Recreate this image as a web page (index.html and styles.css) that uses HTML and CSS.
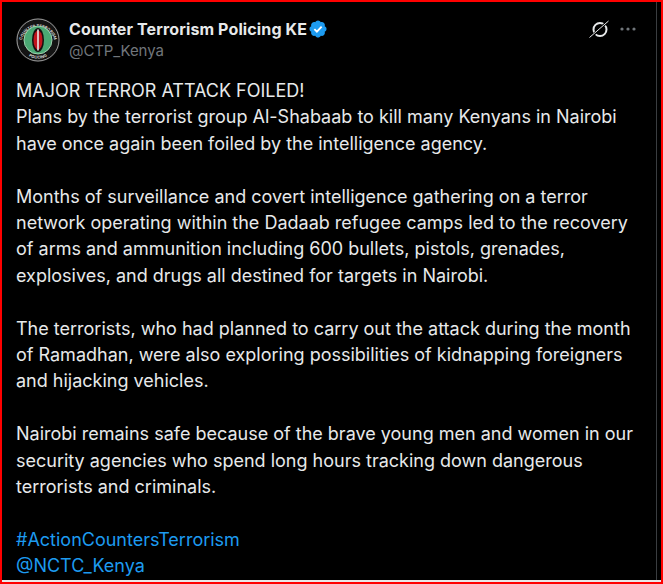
FILE: index.html
```html
<!DOCTYPE html>
<html lang="en">
<head>
  <meta charset="UTF-8">
  <title>Counter Terrorism Policing KE</title>
  <link rel="stylesheet" href="styles.css">
</head>
<body>
  <div class="frame">
    <article class="tweet">
      <header class="tweet-head">
        <svg class="avatar" width="44" height="44" viewBox="0 0 44 44">
          <defs>
            <path id="ring-top" d="M5.500 24A16.600 16.600 0 0 1 38.500 24"/>
            <path id="ring-bottom" d="M3.500 24A18.600 18.600 0 0 0 40.500 24"/>
          </defs>
          <circle cx="22" cy="22" r="22" fill="#141414"/>
          <circle cx="22" cy="22" r="21" fill="none" stroke="#9a9a9a" stroke-width="1"/>
          <text class="ring-text"><textPath href="#ring-top" startOffset="50%" text-anchor="middle">COUNTER TERRORISM</textPath></text>
          <text class="ring-text"><textPath href="#ring-bottom" startOffset="50%" text-anchor="middle">POLICING</textPath></text>
          <circle cx="22" cy="22" r="14" fill="#4aa873" stroke="#9fd0ae" stroke-width="1"/>
          <ellipse cx="22" cy="22" rx="6" ry="12" fill="#15100f"/>
          <ellipse cx="22" cy="22" rx="4.500" ry="9.500" fill="#c0141c"/>
          <rect x="21.200" y="11.500" width="1.600" height="21" fill="#e8e8e8"/>
        </svg>
        <div class="names">
          <div class="name-row">
            <span class="name">Counter Terrorism Policing KE</span>
            <svg class="badge" width="20" height="20" viewBox="0 0 22 22">
              <path fill="#1d9bf0" d="M20.400 11c0-1.300-.8-2.500-2-3 .4-1.300.1-2.700-.8-3.600-.9-.9-2.300-1.200-3.600-.8-.5-1.200-1.700-2-3-2s-2.500.8-3 2c-1.300-.4-2.700-.1-3.600.8-.9.9-1.200 2.300-.8 3.600-1.200.5-2 1.700-2 3s.8 2.500 2 3c-.4 1.300-.1 2.700.8 3.600.9.9 2.300 1.200 3.600.8.5 1.200 1.700 2 3 2s2.500-.8 3-2c1.300.4 2.700.1 3.600-.8.9-.9 1.200-2.300.8-3.600 1.200-.5 2-1.700 2-3z"/>
              <path fill="none" stroke="#fff" stroke-width="2" d="M7 11.200l2.800 2.800 5.200-5.600"/>
            </svg>
          </div>
          <div class="handle">@CTP_Kenya</div>
        </div>
        <div class="head-actions">
          <svg class="grok" width="22" height="22" viewBox="0 0 22 22">
            <circle cx="11" cy="11.500" r="6.500" fill="none" stroke="#e7e9ea" stroke-width="2"/>
            <path d="M3 18L17 5" stroke="#000" stroke-width="2.500"/>
            <path d="M0.500 19.500L19.500 3" stroke="#e7e9ea" stroke-width="1"/>
          </svg>
          <svg class="more" width="18" height="18" viewBox="0 0 18 18">
            <circle cx="3" cy="9" r="1.600" fill="#71767b"/>
            <circle cx="9" cy="9" r="1.600" fill="#71767b"/>
            <circle cx="15" cy="9" r="1.600" fill="#71767b"/>
          </svg>
        </div>
      </header>

      <div class="tweet-text">
        <p>MAJOR TERROR ATTACK FOILED!<br>
        Plans by the terrorist group Al-Shabaab to kill many Kenyans in Nairobi<br>
        have once again been foiled by the intelligence agency.</p>
        <p>Months of surveillance and covert intelligence gathering on a terror<br>
        network operating within the Dadaab refugee camps led to the recovery<br>
        of arms and ammunition including 600 bullets, pistols, grenades,<br>
        explosives, and drugs all destined for targets in Nairobi.</p>
        <p>The terrorists, who had planned to carry out the attack during the month<br>
        of Ramadhan, were also exploring possibilities of kidnapping foreigners<br>
        and hijacking vehicles.</p>
        <p>Nairobi remains safe because of the brave young men and women in our<br>
        security agencies who spend long hours tracking down dangerous<br>
        terrorists and criminals.</p>
        <p><a href="#">#ActionCountersTerrorism</a><br>
        <a href="#">@NCTC_Kenya</a></p>
      </div>
    </article>
  </div>
</body>
</html>
```
FILE: styles.css
```css
html, body {
  margin: 0;
  padding: 0;
}

body {
  width: 663px;
  height: 584px;
  overflow: hidden;
  background-color: #f00;
  font-family: Inter, "Liberation Sans", Arial, sans-serif;
}

.frame {
  box-sizing: border-box;
  width: 659px;
  height: 580px;
  margin: 2px;
  padding-right: 4px;
  background-color: #000;
  border-bottom: 2px solid #e7e7e7;
}

.tweet {
  box-sizing: border-box;
  height: 100%;
  padding: 16px 14px 0 14px;
  background-color: #000;
  border-right: 1px solid #3a3d40;
  overflow: hidden;
}

.tweet-head {
  display: flex;
  align-items: flex-start;
  gap: 9px;
}

.names {
  flex: 1;
}

.name-row {
  display: flex;
  align-items: center;
  gap: 1px;
}

.name {
  font-size: 16px;
  font-weight: 700;
  letter-spacing: 0.12px;
  line-height: 22px;
  color: #e7e9ea;
}

.handle {
  font-size: 15px;
  letter-spacing: -0.1px;
  line-height: 22px;
  color: #71767b;
}

.head-actions {
  display: flex;
  align-items: center;
  gap: 8px;
  height: 22px;
  padding-right: 5px;
}

.ring-text {
  font-size: 4px;
  font-weight: 700;
  fill: #d8d8d8;
}

.tweet-text {
  margin-top: 16px;
  font-size: 18px;
  line-height: 26.400px;
  color: #e7e9ea;
}

.tweet-text p {
  margin: 0 0 26.400px;
}

.tweet-text a {
  color: #1d9bf0;
  text-decoration: none;
}
```
